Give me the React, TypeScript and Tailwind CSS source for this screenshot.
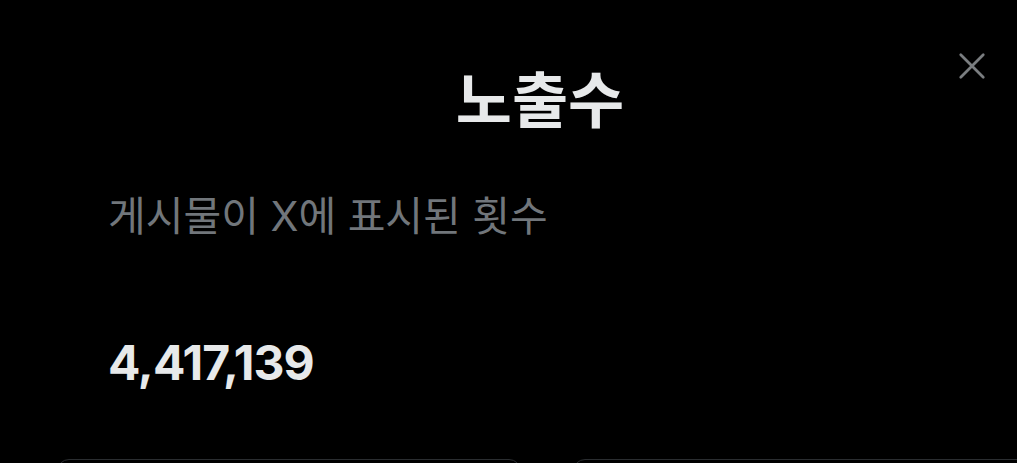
export default function App() {
  return (
    <main
      className="relative flex h-[463px] w-[1017px] flex-col overflow-hidden bg-black"
      style={{ fontFamily: '"Inter", "Noto Sans CJK KR", sans-serif' }}
    >
      {/* close */}
      <button className="absolute right-[30px] top-[51px] flex h-[30px] w-[30px] items-center justify-center text-[#7a7d80]">
        <svg viewBox="0 0 24 24" className="h-[30px] w-[30px]" fill="none" stroke="currentColor" strokeWidth="2.2" strokeLinecap="round">
          <path d="M3 3L21 21M21 3L3 21" />
        </svg>
      </button>

      <div className="px-[108px]">
        <h1 className="mt-[61px] pl-[63px] text-center text-[61px] font-bold leading-[80px] text-[#e7e9ea]">노출수</h1>
        <p className="mt-[51px] text-[41px] leading-[48px] text-[#71767b]">게시물이 X에 표시된 횟수</p>
        <p className="mt-[95px] text-[48px] font-bold leading-[56px] tracking-[-1px] text-[#e7e9ea]">4,417,139</p>
      </div>

      {/* buttons peeking at bottom */}
      <div className="absolute bottom-[-40px] left-[57px] flex gap-[52px]">
        <div className="h-[44px] w-[464px] rounded-xl border border-[#2a2d30]" />
        <div className="h-[44px] w-[464px] rounded-xl border border-[#2a2d30]" />
      </div>
    </main>
  );
}
